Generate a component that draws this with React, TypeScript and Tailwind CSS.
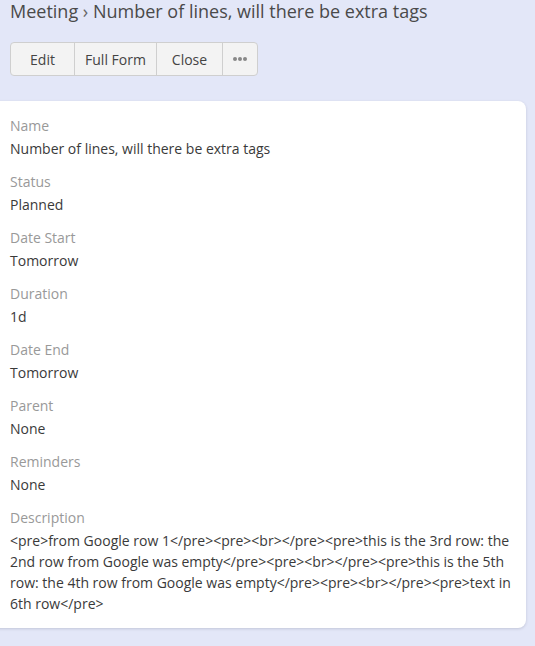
export default function App() {
  const fields = [
    { label: "Name", value: "Number of lines, will there be extra tags" },
    { label: "Status", value: "Planned" },
    { label: "Date Start", value: "Tomorrow" },
    { label: "Duration", value: "1d" },
    { label: "Date End", value: "Tomorrow" },
    { label: "Parent", value: "None" },
    { label: "Reminders", value: "None" },
    {
      label: "Description",
      value:
        "<pre>from Google row 1</pre><pre><br></pre><pre>this is the 3rd row: the 2nd row from Google was empty</pre><pre><br></pre><pre>this is the 5th row: the 4th row from Google was empty</pre><pre><br></pre><pre>text in 6th row</pre>",
    },
  ];

  return (
    <div className="min-h-[646px] w-[535px] overflow-hidden bg-[#e3e7f8] font-['Open_Sans',sans-serif]">
      {/* Header */}
      <div className="px-[10px]">
        <h1 className="text-[18px] leading-[22px] text-[#4a4a4a]">
          Meeting <span className="text-[#666]">›</span> Number of lines, will there be extra tags
        </h1>
        <div className="mt-[20px] inline-flex h-[34px] overflow-hidden rounded-[4px] border border-[#cfcfcf] bg-[#f3f3f3] text-[14px] text-[#444]">
          <button className="w-[64px] border-r border-[#cfcfcf]">Edit</button>
          <button className="w-[82px] border-r border-[#cfcfcf]">Full Form</button>
          <button className="w-[66px] border-r border-[#cfcfcf]">Close</button>
          <button className="flex w-[34px] items-center justify-center gap-[1px]">
            <span className="h-[4px] w-[4px] rounded-full bg-[#888]" />
            <span className="h-[4px] w-[4px] rounded-full bg-[#888]" />
            <span className="h-[4px] w-[4px] rounded-full bg-[#888]" />
          </button>
        </div>
      </div>

      {/* Detail card */}
      <div className="-ml-[10px] mt-[25px] w-[536px] rounded-[8px] bg-white pb-[14px] pl-[20px] pr-[14px] pt-[14px] shadow-[0_1px_3px_rgba(0,0,40,0.15)]">
        {fields.map((f) => (
          <div key={f.label} className="mb-[12px] last:mb-0">
            <div className="mb-[2px] text-[14px] leading-[21px] text-[#999]">{f.label}</div>
            <div className="break-words text-[14px] leading-[21px] text-[#3a3a3a]">{f.value}</div>
          </div>
        ))}
      </div>
    </div>
  );
}
